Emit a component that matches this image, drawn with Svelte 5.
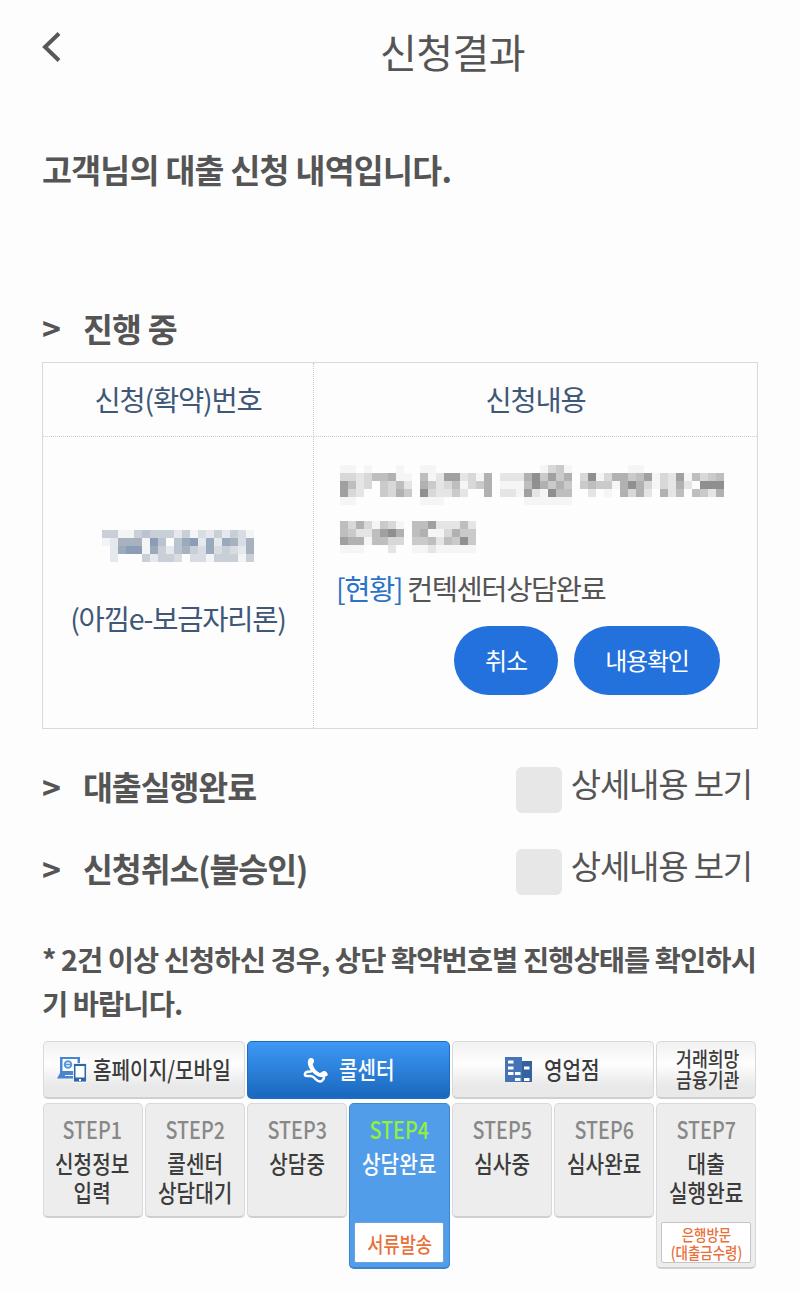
<script>
  const rows = [
    { title: '대출실행완료', checked: false },
    { title: '신청취소(불승인)', checked: false }
  ];

  const steps = [
    { no: 'STEP1', lines: ['신청정보', '입력'] },
    { no: 'STEP2', lines: ['콜센터', '상담대기'] },
    { no: 'STEP3', lines: ['상담중'] },
    { no: 'STEP4', lines: ['상담완료'], active: true, note: ['서류발송'] },
    { no: 'STEP5', lines: ['심사중'] },
    { no: 'STEP6', lines: ['심사완료'] },
    { no: 'STEP7', lines: ['대출', '실행완료'], note: ['은행방문', '(대출금수령)'] }
  ];

  // masked personal data, one digit per block (0 = blank, 8 = darkest)
  const maskedNumber = [
    '4411454442413242431',
    '1266618505782727636',
    '0278817425643734326',
    '0200042443033144414'
  ];
  const maskedAddress = [
    '110100010011000000000000013410000000110000000000',
    '332355611051277231602226847460381366457132715345',
    '752304352064235134601115864640454416863132620888',
    '732004364083224200602217218550020106362062505426',
    '110000000011100000000001111110000000000000000000',
    '000000000000000000000000000000000000000000000000',
    '000000000000000000000000000000000000000000000000',
    '536314310557222520000000000000000000000000000000',
    '542257860561136440000000000000000000000000000000',
    '766155330445254840000000000000000000000000000000',
    '111000200112111110000000000000000000000000000000'
  ];
  const greys = ['#fff', '#f5f5f5', '#e5e5e5', '#d8d8d8', '#cacaca', '#bebebe', '#b1b1b1', '#a0a0a0', '#8f8f8f'];
  const blues = ['#fff', '#f2f4f5', '#e5e9ed', '#d7dde2', '#c8cfd7', '#bac4d0', '#a8b2be', '#9aaabd', '#8b9cb4'];
</script>

{#snippet mosaic(map, colors)}
  <svg class="mosaic" width={map[0].length * 8} height={map.length * 8} shape-rendering="crispEdges">
    {#each map as line, y}
      {#each line.split('') as c, x}
        {#if c !== '0'}
          <rect x={x * 8} y={y * 8} width="8" height="8" fill={colors[+c]} />
        {/if}
      {/each}
    {/each}
  </svg>
{/snippet}

<main class="page">
  <header class="top">
    <button class="back" aria-label="뒤로">
      <svg width="20" height="32" viewBox="0 0 20 32" fill="none" stroke="#585858" stroke-width="4">
        <path d="M17 2.500 3 16l14 13.500" />
      </svg>
    </button>
    <h1>신청결과</h1>
  </header>

  <h2>고객님의 대출 신청 내역입니다.</h2>

  <h3><i>&gt;</i><span>진행 중</span></h3>
  <section class="table">
    <div class="th">신청(확약)번호</div>
    <div class="th">신청내용</div>
    <div class="td number">
      {@render mosaic(maskedNumber, blues)}
      <span>(아낌e-보금자리론)</span>
    </div>
    <div class="td detail">
      {@render mosaic(maskedAddress, greys)}
      <p><b>[현황]</b> 컨텍센터상담완료</p>
      <div class="buttons">
        <button class="btn">취소</button>
        <button class="btn wide">내용확인</button>
      </div>
    </div>
  </section>

  <section class="rows">
    {#each rows as row}
      <div class="row">
        <h3><i>&gt;</i><span>{row.title}</span></h3>
        <label><span class="box"></span><em>상세내용 보기</em></label>
      </div>
    {/each}
  </section>

  <p class="notice">* 2건 이상 신청하신 경우, 상단 확약번호별 진행상태를 확인하시<br />기 바랍니다.</p>

  <section class="flow">
    <div class="tab two home">
      <svg width="30" height="26" viewBox="0 0 30 26">
        <path fill="#4a86d0" d="M3 0h20v17H3z" />
        <path fill="#4a86d0" d="M3 16h14v5.500H0z" />
        <path fill="#fff" d="M5.500 2h15v12h-15z" />
        <circle cx="11" cy="7.500" r="3.300" fill="none" stroke="#5b96da" stroke-width="2" />
        <path stroke="#5b96da" stroke-width="1.600" d="M8 7.500h6" />
        <path stroke="#fff" d="M8 18.500h8" />
        <path fill="#2f66a8" stroke="#fff" stroke-width=".8" d="M16.500 6.500h13v18.500h-13z" />
        <path fill="#fff" d="M18.500 9h9v11.500h-9zM22 22h2v2h-2z" />
      </svg>
      <span class="narrow">홈페이지/모바일</span>
    </div>
    <div class="tab two on">
      <svg width="26" height="26" viewBox="0 0 26 26">
        <path fill="#fff" d="M5.500 2.500C7 .3 10.300.8 11 3.200c.4 1.700-.8 2.800-1.300 4.300 1 4 4 7 7 8.500 2-.3 2.500-2 4.300-2 2.500 0 4.300 2.500 3.500 4.500C19 22.500 12.500 19 9 14.800 6 11.300 3.500 6 5.500 2.500Z" />
        <path fill="none" stroke="#fff" stroke-width="2.500" stroke-linecap="round" d="M8 14.500c-3.500-.3-6 1-6.200 3 .2 3 4.700.3 7.700 2s4 5 7.500 5c2.500 0 3-1.500 4-3.500" />
      </svg>
      <span class="narrow">콜센터</span>
    </div>
    <div class="tab two branch">
      <svg width="27" height="26" viewBox="0 0 27 26">
        <path fill="#4474b5" d="M0 0h17v25H0z" />
        <path fill="#33629f" d="M17 4h10v21H17z" />
        <path fill="#fff" d="M3 3.500h5.500v3H3zM3 9.500h5.500v3H3zM3 15h5.500v3H3zM10 15h5.500v3H10zM10 21h5.500v3H10zM19 9.500h5.500v3H19zM19 21h5.500v3H19z" />
      </svg>
      <span class="narrow">영업점</span>
    </div>
    <div class="tab bank">
      <span class="narrow">거래희망</span>
      <span class="narrow">금융기관</span>
    </div>

    {#each steps as step}
      <div class="step" class:on={step.active} class:tall={step.note}>
        <span class="no">{step.no}</span>
        <div class="name">
          {#each step.lines as line}<span class="narrow">{line}</span>{/each}
        </div>
        {#if step.note}
          <div class="note" class:small={step.note.length > 1}>
            {#each step.note as line}<span class="narrow">{line}</span>{/each}
          </div>
        {/if}
      </div>
    {/each}
  </section>
</main>

<style>
  :global(body) {
    background: #fdfdfd;
  }

  .page {
    box-sizing: border-box;
    width: 800px;
    height: 1291px;
    padding: 0 42px;
    overflow: hidden;
    color: #555;
    font-family: 'Noto Sans CJK KR', 'Noto Sans', sans-serif;
    white-space: nowrap;
  }

  h1, h2, h3, p {
    margin: 0;
  }

  button {
    border: 0;
    padding: 0;
    background: none;
    font-family: inherit;
  }

  svg {
    display: block;
    flex: none;
  }

  .top {
    display: grid;
    grid-template-columns: 105px 1fr;
    align-items: center;
    height: 102px;
  }

  .back {
    justify-self: start;
    margin-top: -8px;
  }

  h1 {
    font-size: 40px;
    font-weight: 400;
    letter-spacing: -0.015em;
    text-align: center;
  }

  h2 {
    height: 132px;
    line-height: 134px;
    font-size: 32.5px;
    font-weight: 600;
    letter-spacing: -0.022em;
  }

  h3 {
    display: flex;
    align-items: center;
    font-size: 32.5px;
    font-weight: 600;
    letter-spacing: -0.025em;
  }

  h3 i {
    width: 41px;
    font-size: 32px;
    font-style: normal;
  }

  .page > h3 {
    height: 62px;
    margin: 62px 0 4px;
  }

  .table {
    display: grid;
    grid-template-columns: 271px minmax(0, 1fr);
    grid-template-rows: 74px 291px;
    border: 1px solid #d9d9d9;
    color: #3f5878;
    font-size: 28.5px;
    font-weight: 400;
    letter-spacing: -0.042em;
  }

  .th {
    border-bottom: 1px dotted #ccc;
    line-height: 72px;
    text-align: center;
  }

  .th:nth-child(odd), .td.number {
    border-right: 1px dotted #ccc;
  }

  .number {
    display: flex;
    flex-direction: column;
    align-items: center;
    padding-top: 93px;
  }

  .number span {
    margin-top: 35px;
  }

  .detail {
    padding: 28px 37px 0 26px;
    color: #555;
  }

  .detail p {
    height: 62px;
    line-height: 61px;
    margin: 4px 0 0 -4px;
    letter-spacing: -0.05em;
  }

  .detail b {
    color: #2b73c8;
    font-weight: 400;
  }

  .buttons {
    display: flex;
    justify-content: flex-end;
    gap: 16px;
    margin-top: 7px;
  }

  .btn {
    width: 104px;
    height: 69px;
    padding-bottom: 2px;
    border-radius: 35px;
    background: #2371dc;
    color: #fff;
    font-size: 24px;
    letter-spacing: -0.05em;
  }

  .btn.wide {
    width: 146px;
  }

  .rows {
    margin-top: 18px;
  }

  .row {
    display: flex;
    justify-content: space-between;
    height: 82px;
  }

  .row h3 {
    height: 77px;
    letter-spacing: -0.033em;
  }

  label {
    display: flex;
    align-items: center;
    gap: 9px;
    padding-right: 6px;
  }

  label em {
    margin-top: -11px;
    font-size: 33px;
    font-style: normal;
    font-weight: 400;
    letter-spacing: -0.036em;
  }

  .box {
    width: 46px;
    height: 46px;
    margin-top: 4px;
    border-radius: 6px;
    background: #e7e7e7;
  }

  .notice {
    margin-top: 26px;
    font-size: 28.5px;
    font-weight: 600;
    line-height: 44px;
    letter-spacing: -0.033em;
  }

  .flow {
    display: grid;
    grid-template-columns: repeat(7, 1fr);
    grid-template-rows: 58px auto;
    align-items: start;
    gap: 4px 2px;
    width: 714px;
    margin: 16px 0 0 0.5px;
    color: #3c3c3c;
    font-weight: 500;
  }

  .tab, .step {
    box-sizing: border-box;
    border: 1px solid #d9d9d9;
    border-bottom: 2px solid #cfcfcf;
    border-radius: 5px;
    background: #ededed;
  }

  .tab {
    display: flex;
    align-items: center;
    height: 58px;
    background: linear-gradient(#f1f1f1, #fefefe 40%, #e9e9e9 80%);
    font-size: 24px;
  }

  .two {
    grid-column: span 2;
  }

  .tab.on {
    border-color: #1d6cc3;
    background: linear-gradient(#3e99f5, #1a68be);
    color: #fff;
  }

  .narrow {
    display: block;
    transform: scaleX(0.84);
  }

  .two .narrow {
    margin-top: -2px;
    transform-origin: left;
  }

  .home {
    gap: 6px;
    padding-left: 13px;
  }

  .tab.on {
    gap: 10px;
    padding-left: 55px;
  }

  .branch {
    gap: 12px;
    padding-left: 52px;
  }

  .bank {
    flex-direction: column;
    justify-content: center;
    padding: 0 0 1px 3px;
    font-size: 20.5px;
    line-height: 21px;
  }

  .step {
    display: flex;
    flex-direction: column;
    align-items: center;
    height: 115px;
    padding-top: 10px;
  }

  .step.tall {
    height: 166px;
  }

  .no {
    color: #888;
    font-size: 24px;
    font-weight: 500;
    line-height: 30px;
    transform: scaleX(0.82);
  }

  .name {
    height: 76px;
    margin-top: 4px;
    font-size: 24px;
    line-height: 29px;
    text-align: center;
  }

  .step.on {
    border-color: #3d84cf;
    background: #529de9;
    color: #fff;
  }

  .on .no {
    color: #90f03c;
  }

  .note {
    display: flex;
    flex-direction: column;
    align-items: center;
    justify-content: center;
    box-sizing: border-box;
    width: 90px;
    height: 41px;
    margin-top: -2px;
    border: 1px solid #c5c5c5;
    border-radius: 2px;
    background: #fff;
    color: #e8703a;
    font-size: 21px;
    line-height: 18px;
  }

  .on .note {
    border-color: #6ba3dc;
  }

  .note.small {
    font-size: 16px;
  }
</style>
